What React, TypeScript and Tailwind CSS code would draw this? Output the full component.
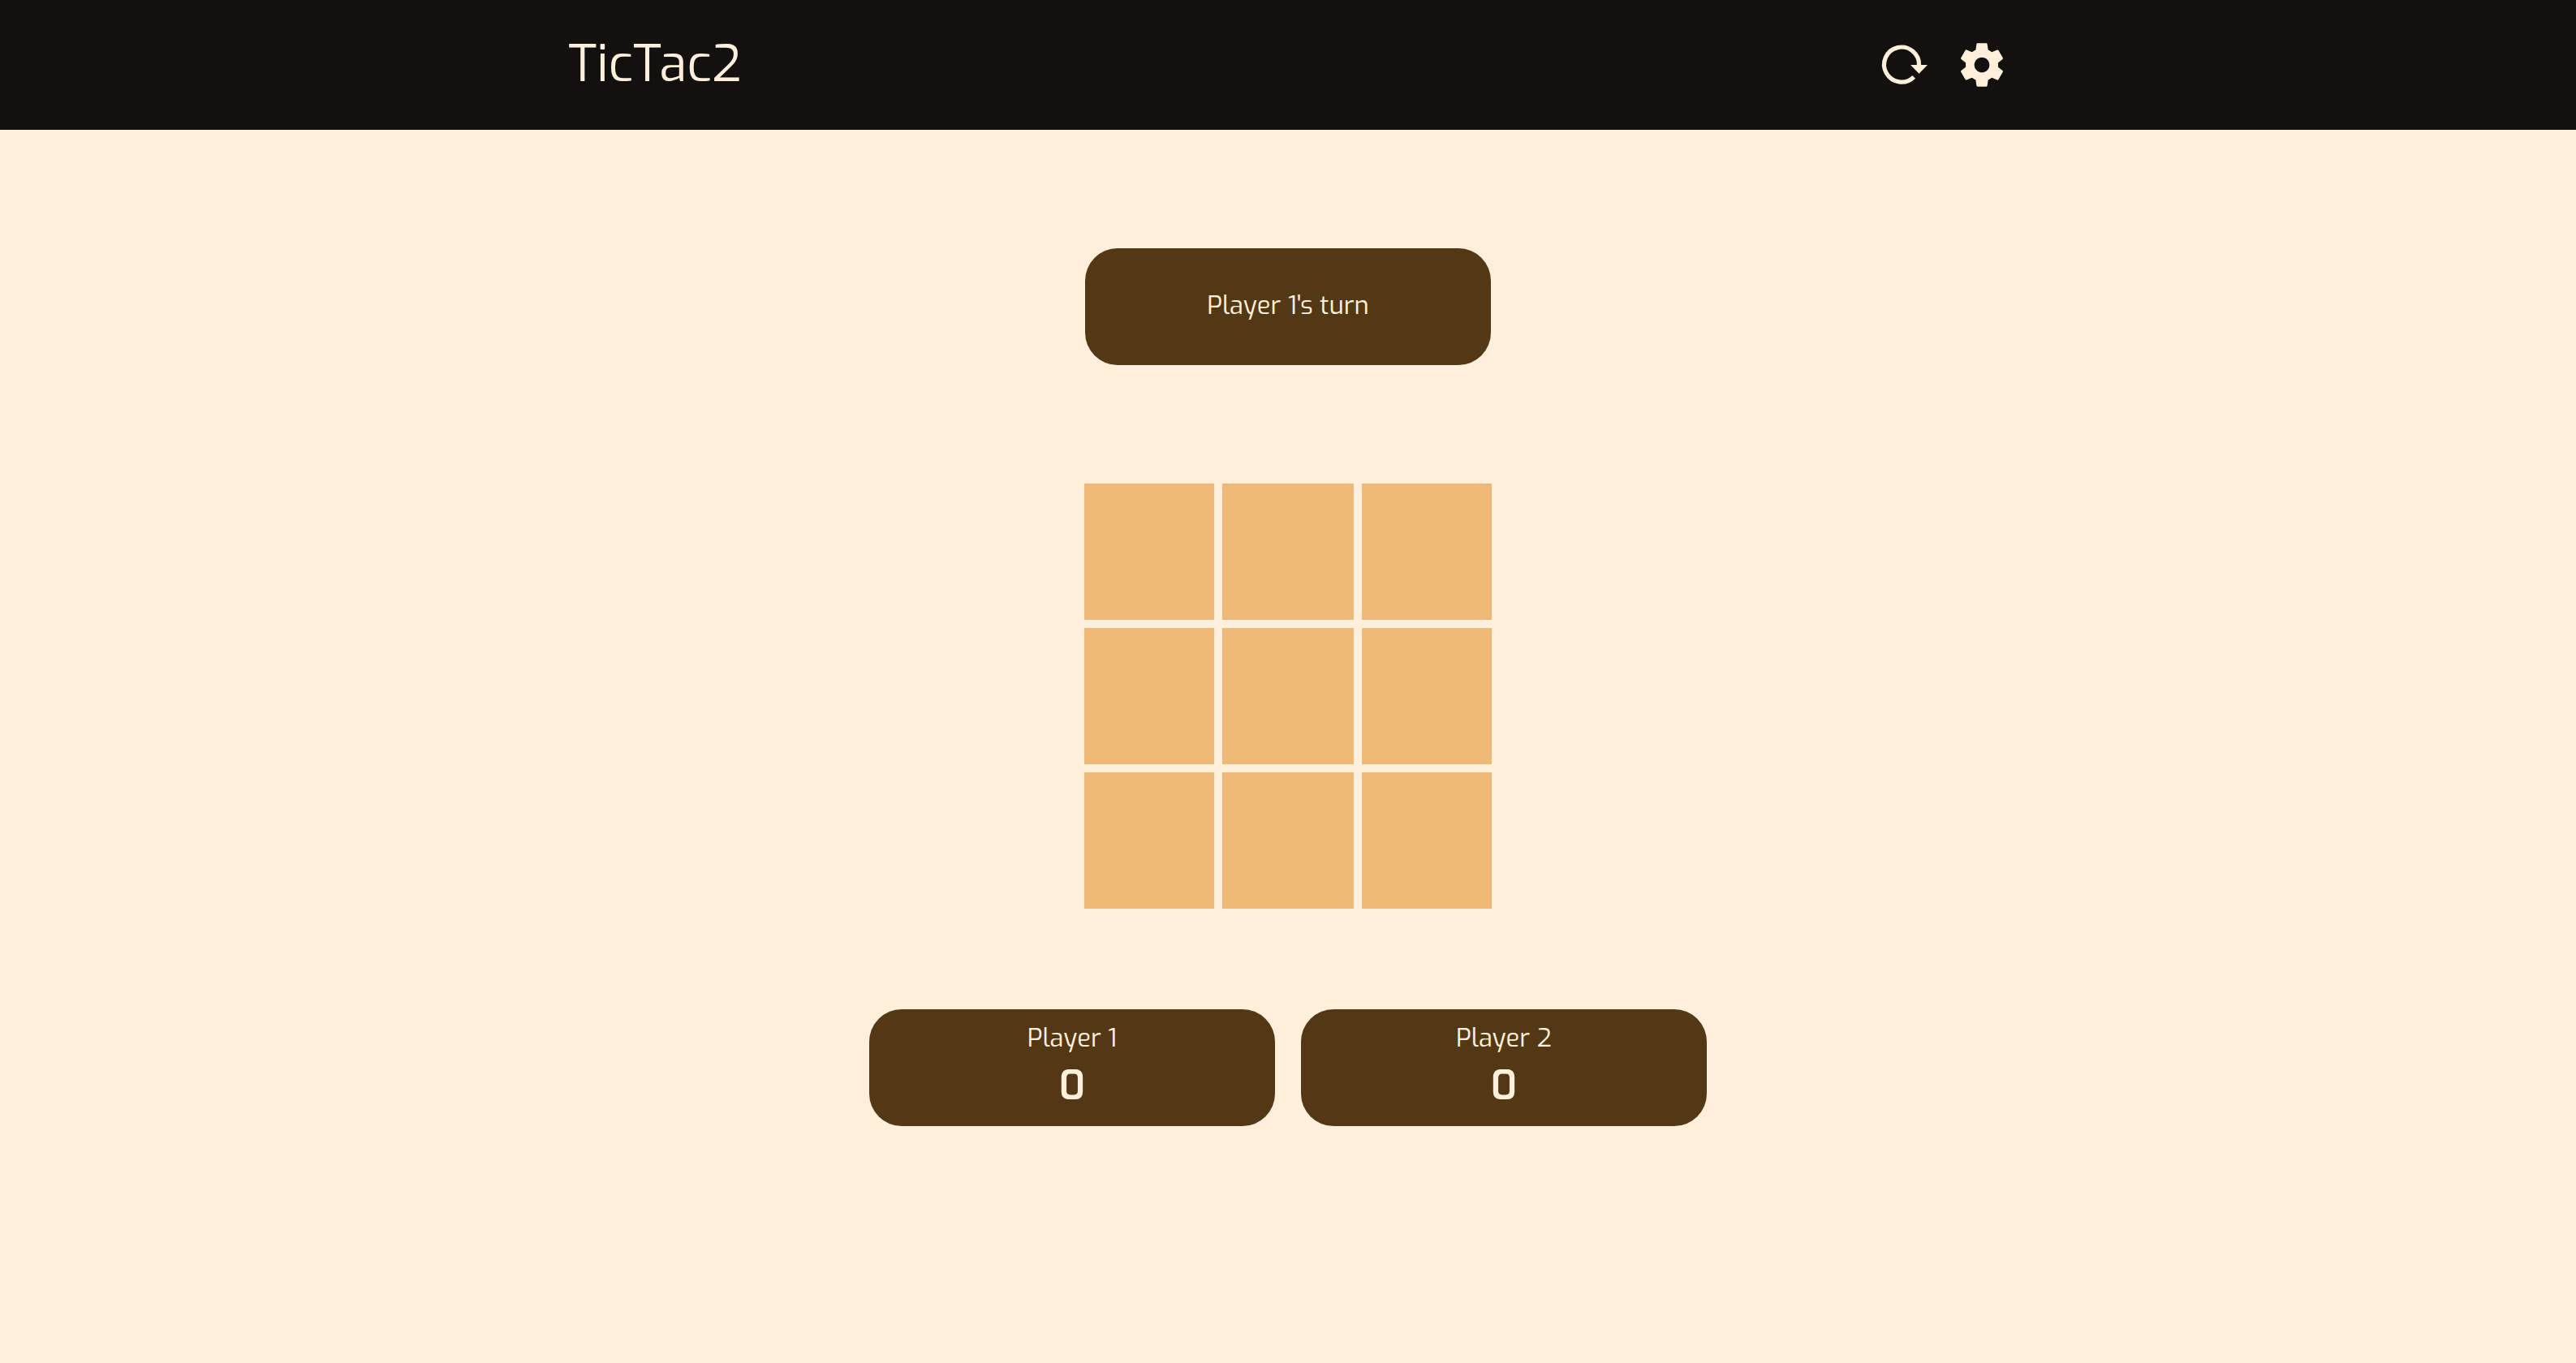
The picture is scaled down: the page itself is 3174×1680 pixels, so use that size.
import { useState } from "react";

function RefreshIcon() {
  return (
    <svg viewBox="0 0 64 64" className="size-16" aria-hidden="true">
      <path d="M50.5 32.5A21.5 21.5 0 1 0 44.2 46.8" fill="none" stroke="currentColor" strokeWidth="5.2" />
      <path d="M40 32h21L50.5 42.8z" fill="currentColor" />
    </svg>
  );
}

function SettingsIcon() {
  return (
    <svg viewBox="0 0 24 24" className="size-16" fill="currentColor" aria-hidden="true">
      <path d="M19.43 12.98c.04-.32.07-.64.07-.98s-.03-.66-.07-.98l2.11-1.65c.19-.15.24-.42.12-.64l-2-3.46c-.12-.22-.39-.3-.61-.22l-2.49 1c-.52-.4-1.08-.73-1.69-.98l-.38-2.65C14.46 2.18 14.25 2 14 2h-4c-.25 0-.46.18-.49.42l-.38 2.65c-.61.25-1.17.59-1.69.98l-2.49-1c-.23-.09-.49 0-.61.22l-2 3.46c-.13.22-.07.49.12.64l2.11 1.65c-.04.32-.07.65-.07.98s.03.66.07.98l-2.11 1.65c-.19.15-.24.42-.12.64l2 3.46c.12.22.39.3.61.22l2.49-1c.52.4 1.08.73 1.69.98l.38 2.65c.03.24.24.42.49.42h4c.25 0 .46-.18.49-.42l.38-2.65c.61-.25 1.17-.59 1.69-.98l2.49 1c.23.09.49 0 .61-.22l2-3.46c.12-.22.07-.49-.12-.64l-2.11-1.65zM12 15.5c-1.93 0-3.5-1.57-3.5-3.5s1.57-3.5 3.5-3.5 3.5 1.57 3.5 3.5-1.57 3.5-3.5 3.5z" />
    </svg>
  );
}

function ScoreCard({ name, score }: { name: string; score: number }) {
  return (
    <section className="flex h-36 w-[500px] flex-col items-center rounded-[40px] bg-[#533816] pt-4">
      <h2 className="text-[31px] leading-10">{name}</h2>
      <p className="text-[50px] font-semibold leading-[76px]">{score}</p>
    </section>
  );
}

const emptyBoard = (): string[] => Array(9).fill("");

export default function App() {
  const [cells, setCells] = useState<string[]>(emptyBoard);
  const player = cells.filter(Boolean).length % 2;

  const play = (index: number) => {
    if (cells[index]) return;
    setCells(cells.map((cell, i) => (i === index ? (player === 0 ? "X" : "O") : cell)));
  };

  return (
    <div className="min-h-screen bg-[#ffefdb] font-['Exo','Lato',sans-serif] text-[#ffefdb]">
      <header className="flex h-40 items-center justify-around bg-[#12110f]">
        <h1 className="pb-0.5 text-[62px] leading-20">TicTac2</h1>
        <div className="flex gap-8">
          <button type="button" aria-label="Restart game" onClick={() => setCells(emptyBoard())}>
            <RefreshIcon />
          </button>
          <button type="button" aria-label="Settings">
            <SettingsIcon />
          </button>
        </div>
      </header>
      <main className="flex flex-col items-center pt-[146px]">
        <p className="flex h-36 w-[500px] items-center justify-center rounded-[40px] bg-[#533816] pb-0.5 text-[31px] leading-10">
          Player {player + 1}'s turn
        </p>
        <div className="mt-[146px] grid grid-cols-[160px_162px_160px] gap-2.5">
          {cells.map((cell, i) => (
            <button
              key={i}
              type="button"
              aria-label={`Cell ${i + 1}`}
              onClick={() => play(i)}
              className="h-[168px] bg-[#efba78] text-8xl text-[#533816]"
            >
              {cell}
            </button>
          ))}
        </div>
        <div className="mt-[124px] flex gap-8">
          <ScoreCard name="Player 1" score={0} />
          <ScoreCard name="Player 2" score={0} />
        </div>
      </main>
    </div>
  );
}
